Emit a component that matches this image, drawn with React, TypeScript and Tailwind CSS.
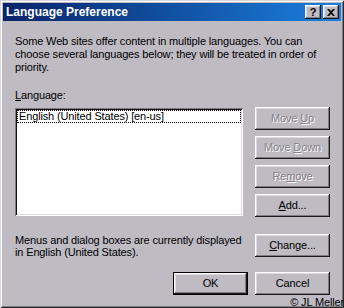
const RAISED =
  'shadow-[inset_-1px_-1px_#1a1a1a,inset_1px_1px_#ffffff,inset_-2px_-2px_#7f7c84,inset_2px_2px_#dcdae0]';

function Button({
  children,
  disabled,
  isDefault,
}: {
  children: React.ReactNode;
  disabled?: boolean;
  isDefault?: boolean;
}) {
  const label = disabled
    ? 'text-[#85828a] [text-shadow:1px_1px_0_#ffffff]'
    : 'text-black';

  if (isDefault) {
    return (
      <div className="w-[75px] h-[23px] border border-black bg-[#bebbc3]">
        <div className={`w-full h-full flex items-center justify-center ${RAISED} ${label}`}>
          <span>{children}</span>
        </div>
      </div>
    );
  }

  return (
    <div className={`w-[75px] h-[23px] flex items-center justify-center bg-[#bebbc3] ${RAISED} ${label}`}>
      <span>{children}</span>
    </div>
  );
}

function CaptionButton({ children }: { children: React.ReactNode }) {
  return (
    <div className={`w-[16px] h-[14px] flex items-center justify-center bg-[#bebbc3] ${RAISED}`}>
      {children}
    </div>
  );
}

export default function App() {
  return (
    <div
      className="relative w-[344px] h-[308px] overflow-hidden p-[3px] bg-[#bebbc3] text-[11px] text-black
                 font-['Liberation_Sans',Arial,sans-serif] tracking-[-0.14px]
                 shadow-[inset_1px_1px_#d8d6dc,inset_-1px_-1px_#2a2a2a,inset_2px_2px_#ffffff,inset_-2px_-2px_#7f7c84]"
    >
      {/* Title bar */}
      <div className="h-[18px] flex items-center pl-[3px] pr-[2px] bg-gradient-to-r from-[#0a246a] to-[#1c80de]">
        <span className="text-white font-bold text-[12px] leading-none tracking-normal">Language Preference</span>
        <div className="ml-auto flex gap-[2px]">
          <CaptionButton>
            <span className="font-bold text-[11px] leading-none pt-[1px]">?</span>
          </CaptionButton>
          <CaptionButton>
            <svg width="8" height="7" viewBox="0 0 8 7">
              <path d="M0 0h2l2 2 2-2h2L5 3.5 8 7H6L4 5 2 7H0l3-3.5z" fill="#000" />
            </svg>
          </CaptionButton>
        </div>
      </div>

      {/* Body */}
      <div className="pl-[12px] pr-[11px] leading-[13px]">
        <div className="mt-[14px]">
          <div>Some Web sites offer content in multiple languages. You can</div>
          <div>choose several languages below; they will be treated in order of</div>
          <div>priority.</div>
        </div>

        <div className="mt-[15px]">
          <u>L</u>anguage:
        </div>

        <div className="mt-[5px] flex gap-[12px]">
          {/* List box */}
          <div
            className="mt-[1px] w-[228px] h-[108px] bg-white p-[2px]
                       shadow-[inset_1px_1px_#7f7c84,inset_-1px_-1px_#ffffff,inset_2px_2px_#101010,inset_-2px_-2px_#dcdae0]"
          >
            <div className="h-[13px] border border-dotted border-black pl-[1px] leading-[11px]">
              English (United States) [en-us]
            </div>
          </div>

          <div className="flex flex-col gap-[6px]">
            <Button disabled>
              Move <u>U</u>p
            </Button>
            <Button disabled>
              Move <u>D</u>own
            </Button>
            <Button disabled>
              Re<u>m</u>ove
            </Button>
            <Button>
              <u>A</u>dd...
            </Button>
          </div>
        </div>

        <div className="mt-[17px] flex justify-between">
          <div className="leading-[12px]">
            <div>Menus and dialog boxes are currently displayed</div>
            <div>in English (United States).</div>
          </div>
          <Button>
            <u>C</u>hange...
          </Button>
        </div>

        <div className="mt-[14px] flex justify-end gap-[7px]">
          <Button isDefault>OK</Button>
          <Button>Cancel</Button>
        </div>
      </div>

      {/* Watermark */}
      <div className="absolute right-0 bottom-[0px] leading-[11px] text-[11px]">© JL Meller</div>
    </div>
  );
}
